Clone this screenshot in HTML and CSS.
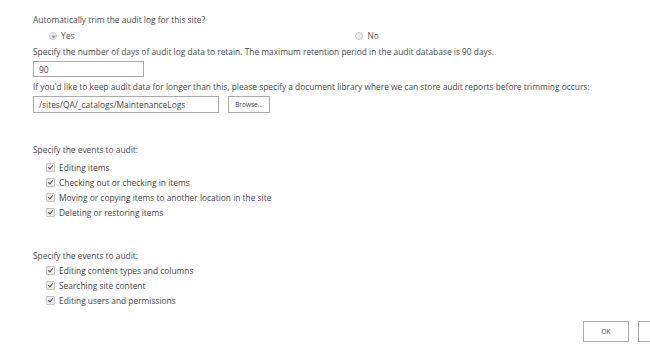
FILE: index.html
```html
<!DOCTYPE html>
<html>
<head>
<meta charset="utf-8">
<link rel="stylesheet" href="styles.css">
</head>
<body>
<div class="page">
  <div class="edge">f</div>
  <div class="form">
    <div class="q">Automatically trim the audit log for this site?</div>
    <div class="radios">
      <label class="radio yes"><span class="dot on"></span>Yes</label>
      <label class="radio no"><span class="dot"></span>No</label>
    </div>
    <div class="q">Specify the number of days of audit log data to retain. The maximum retention period in the audit database is 90 days.</div>
    <div class="field"><div class="input days">90</div></div>
    <div class="q">If you'd like to keep audit data for longer than this, please specify a document library where we can store audit reports before trimming occurs:</div>
    <div class="field row">
      <div class="input lib">/sites/QA/_catalogs/MaintenanceLogs</div>
      <div class="btn browse">Browse...</div>
    </div>

    <div class="group g1">
      <div class="q">Specify the events to audit:</div>
      <ul class="checks">
        <li><span class="cb"></span>Editing items</li>
        <li><span class="cb"></span>Checking out or checking in items</li>
        <li><span class="cb"></span>Moving or copying items to another location in the site</li>
        <li><span class="cb"></span>Deleting or restoring items</li>
      </ul>
    </div>

    <div class="group g2">
      <div class="q">Specify the events to audit:</div>
      <ul class="checks">
        <li><span class="cb"></span>Editing content types and columns</li>
        <li><span class="cb"></span>Searching site content</li>
        <li><span class="cb"></span>Editing users and permissions</li>
      </ul>
    </div>

    <div class="actions">
      <div class="btn ok">OK</div>
      <div class="btn cancel">Cancel</div>
    </div>
  </div>
</div>
</body>
</html>
```
FILE: styles.css
```css
html, body {
  margin: 0;
  padding: 0;
  background: #fff;
  overflow: hidden;
}
body {
  font-family: "Open Sans", "Noto Sans", sans-serif;
  font-size: 8.4px;
  color: #4a4a4a;
  width: 650px;
  height: 348px;
}
.page {
  position: relative;
  width: 650px;
  height: 348px;
  overflow: hidden;
}
.edge {
  position: absolute;
  left: -3px;
  top: 15px;
  color: #6aa6d8;
  font-size: 8px;
}
.form {
  padding: 14px 0 0 33px;
}
.q {
  line-height: 12px;
  height: 12px;
  white-space: nowrap;
}
.radios {
  display: flex;
  height: 12px;
  line-height: 12px;
  margin: 4px 0 4px 16px;
}
.radio {
  display: flex;
  align-items: center;
  color: #555;
}
.radio.no {
  margin-left: 281px;
}
.dot {
  width: 6px;
  height: 6px;
  border: 1px solid #c8c8c8;
  border-radius: 50%;
  background: #eee;
  margin-right: 4px;
  position: relative;
  box-sizing: content-box;
}
.dot.on::after {
  content: "";
  position: absolute;
  left: 1.5px;
  top: 1.5px;
  width: 3px;
  height: 3px;
  border-radius: 50%;
  background: #999;
}
.field {
  margin: 3px 0 4px 0;
}
.row {
  display: flex;
  gap: 9px;
}
.input {
  border: 1px solid #ababab;
  height: 16px;
  line-height: 15px;
  box-sizing: border-box;
  padding-left: 5px;
  color: #444;
  background: #fff;
}
.days {
  width: 111px;
}
.lib {
  width: 186px;
  height: 17px;
  line-height: 16px;
}
.btn {
  border: 1px solid #ababab;
  box-sizing: border-box;
  text-align: center;
  color: #444;
  background: #fdfdfd;
  font-size: 6.5px;
}
.browse {
  width: 42px;
  height: 17px;
  line-height: 15px;
}
.group.g1 {
  margin-top: 31px;
}
.group.g2 {
  margin-top: 30px;
}
.checks {
  list-style: none;
  margin: 4px 0 0 13px;
  padding: 0;
}
.g2 .checks {
  margin-top: 1px;
}
.checks li {
  display: flex;
  align-items: center;
  height: 15px;
  line-height: 15px;
  color: #444;
}
.cb {
  width: 7px;
  height: 7px;
  border: 1px solid #c4c4c4;
  background: #ececec;
  margin-right: 4px;
  position: relative;
  border-radius: 1px;
}
.cb::after {
  content: "";
  position: absolute;
  left: 2px;
  top: 0px;
  width: 2px;
  height: 4px;
  border-right: 1.5px solid #555;
  border-bottom: 1.5px solid #555;
  transform: rotate(40deg);
}
.actions {
  display: flex;
  gap: 9px;
  margin-top: 13px;
  padding-left: 550px;
}
.ok, .cancel {
  width: 46px;
  height: 21px;
  line-height: 19px;
  flex: none;
}
```
